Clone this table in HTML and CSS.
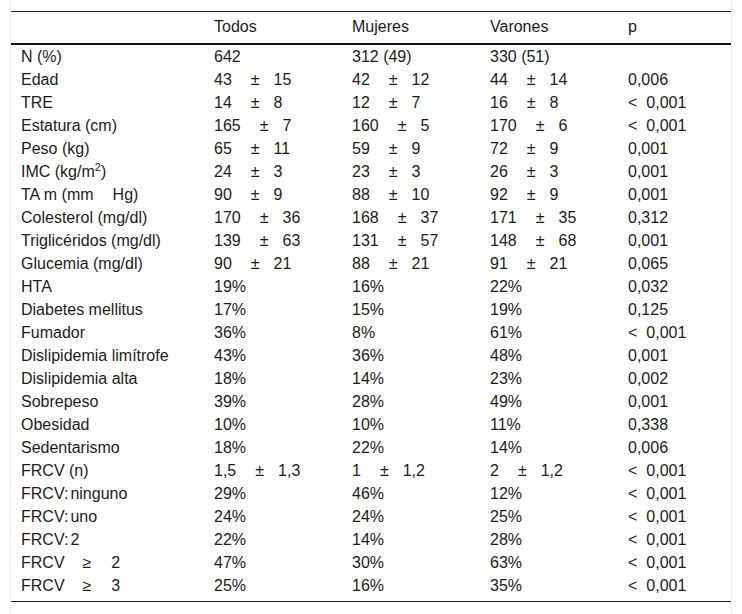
FILE: index.html
```html
<!DOCTYPE html>
<html lang="es">
<head>
<meta charset="utf-8">
<title>Tabla</title>
<link rel="stylesheet" href="styles.css">
</head>
<body>
<div class="frame">
<table class="data">
<colgroup>
<col class="c-label"><col class="c-val"><col class="c-val"><col class="c-val"><col class="c-p">
</colgroup>
<thead>
<tr><th></th><th>Todos</th><th>Mujeres</th><th>Varones</th><th>p</th></tr>
</thead>
<tbody>
<tr><td>N (%)</td><td>642</td><td>312 (49)</td><td>330 (51)</td><td></td></tr>
<tr><td>Edad</td><td>43<span class="pm">±</span>15</td><td>42<span class="pm">±</span>12</td><td>44<span class="pm">±</span>14</td><td>0,006</td></tr>
<tr><td>TRE</td><td>14<span class="pm">±</span>8</td><td>12<span class="pm">±</span>7</td><td>16<span class="pm">±</span>8</td><td><span class="lt">&lt;</span>0,001</td></tr>
<tr><td>Estatura (cm)</td><td>165<span class="pm">±</span>7</td><td>160<span class="pm">±</span>5</td><td>170<span class="pm">±</span>6</td><td><span class="lt">&lt;</span>0,001</td></tr>
<tr><td>Peso (kg)</td><td>65<span class="pm">±</span>11</td><td>59<span class="pm">±</span>9</td><td>72<span class="pm">±</span>9</td><td>0,001</td></tr>
<tr><td>IMC (kg/m<sup>2</sup>)</td><td>24<span class="pm">±</span>3</td><td>23<span class="pm">±</span>3</td><td>26<span class="pm">±</span>3</td><td>0,001</td></tr>
<tr><td>TA m (mm<span class="gap"></span>Hg)</td><td>90<span class="pm">±</span>9</td><td>88<span class="pm">±</span>10</td><td>92<span class="pm">±</span>9</td><td>0,001</td></tr>
<tr><td>Colesterol (mg/dl)</td><td>170<span class="pm">±</span>36</td><td>168<span class="pm">±</span>37</td><td>171<span class="pm">±</span>35</td><td>0,312</td></tr>
<tr><td>Triglicéridos (mg/dl)</td><td>139<span class="pm">±</span>63</td><td>131<span class="pm">±</span>57</td><td>148<span class="pm">±</span>68</td><td>0,001</td></tr>
<tr><td>Glucemia (mg/dl)</td><td>90<span class="pm">±</span>21</td><td>88<span class="pm">±</span>21</td><td>91<span class="pm">±</span>21</td><td>0,065</td></tr>
<tr><td>HTA</td><td>19%</td><td>16%</td><td>22%</td><td>0,032</td></tr>
<tr><td>Diabetes mellitus</td><td>17%</td><td>15%</td><td>19%</td><td>0,125</td></tr>
<tr><td>Fumador</td><td>36%</td><td>8%</td><td>61%</td><td><span class="lt">&lt;</span>0,001</td></tr>
<tr><td>Dislipidemia limítrofe</td><td>43%</td><td>36%</td><td>48%</td><td>0,001</td></tr>
<tr><td>Dislipidemia alta</td><td>18%</td><td>14%</td><td>23%</td><td>0,002</td></tr>
<tr><td>Sobrepeso</td><td>39%</td><td>28%</td><td>49%</td><td>0,001</td></tr>
<tr><td>Obesidad</td><td>10%</td><td>10%</td><td>11%</td><td>0,338</td></tr>
<tr><td>Sedentarismo</td><td>18%</td><td>22%</td><td>14%</td><td>0,006</td></tr>
<tr><td>FRCV (n)</td><td>1,5<span class="pm">±</span>1,3</td><td>1<span class="pm">±</span>1,2</td><td>2<span class="pm">±</span>1,2</td><td><span class="lt">&lt;</span>0,001</td></tr>
<tr><td>FRCV:<span class="thin"></span>ninguno</td><td>29%</td><td>46%</td><td>12%</td><td><span class="lt">&lt;</span>0,001</td></tr>
<tr><td>FRCV:<span class="thin"></span>uno</td><td>24%</td><td>24%</td><td>25%</td><td><span class="lt">&lt;</span>0,001</td></tr>
<tr><td>FRCV:<span class="thin"></span>2</td><td>22%</td><td>14%</td><td>28%</td><td><span class="lt">&lt;</span>0,001</td></tr>
<tr><td>FRCV<span class="ge">≥</span>2</td><td>47%</td><td>30%</td><td>63%</td><td><span class="lt">&lt;</span>0,001</td></tr>
<tr class="last"><td>FRCV<span class="ge">≥</span>3</td><td>25%</td><td>16%</td><td>35%</td><td><span class="lt">&lt;</span>0,001</td></tr>
</tbody>
</table>
</div>
</body>
</html>
```

FILE: styles.css
```css
html, body {
  margin: 0;
  padding: 0;
  background: #ffffff;
}

body {
  font-family: "Liberation Sans", Arial, sans-serif;
  font-size: 16px;
  color: #1c1c1c;
}

.frame {
  margin: 0 10px;
  min-height: 614px;
  box-sizing: border-box;
  padding-top: 11px;
  border-left: 1px solid #ececec;
  border-right: 1px solid #ececec;
}

.data {
  width: 720px;
  border-collapse: collapse;
  table-layout: fixed;
  border-top: 1px solid #222;
  border-bottom: 1px solid #222;
}

.c-label { width: 193px; }
.c-val { width: 138px; }
.c-p { width: 113px; }

.data th {
  font-weight: normal;
  text-align: left;
  height: 32px;
  padding: 0 10px 1px;
  line-height: 18px;
  border-bottom: 2px solid #111;
  box-sizing: border-box;
}

.data td {
  padding: 0 10px;
  height: 23px;
  line-height: 23px;
  white-space: nowrap;
  vertical-align: middle;
}

.data tr.last td {
  padding-bottom: 4px;
}

.pm {
  display: inline-block;
  margin: 0 14px 0 19px;
}

.lt {
  display: inline-block;
  margin-right: 9px;
}

.ge {
  display: inline-block;
  margin: 0 20px 0 18px;
}

.gap {
  display: inline-block;
  width: 19px;
}

.thin {
  display: inline-block;
  width: 2px;
}

sup {
  font-size: 11px;
  line-height: 0;
  vertical-align: 6px;
}
```
